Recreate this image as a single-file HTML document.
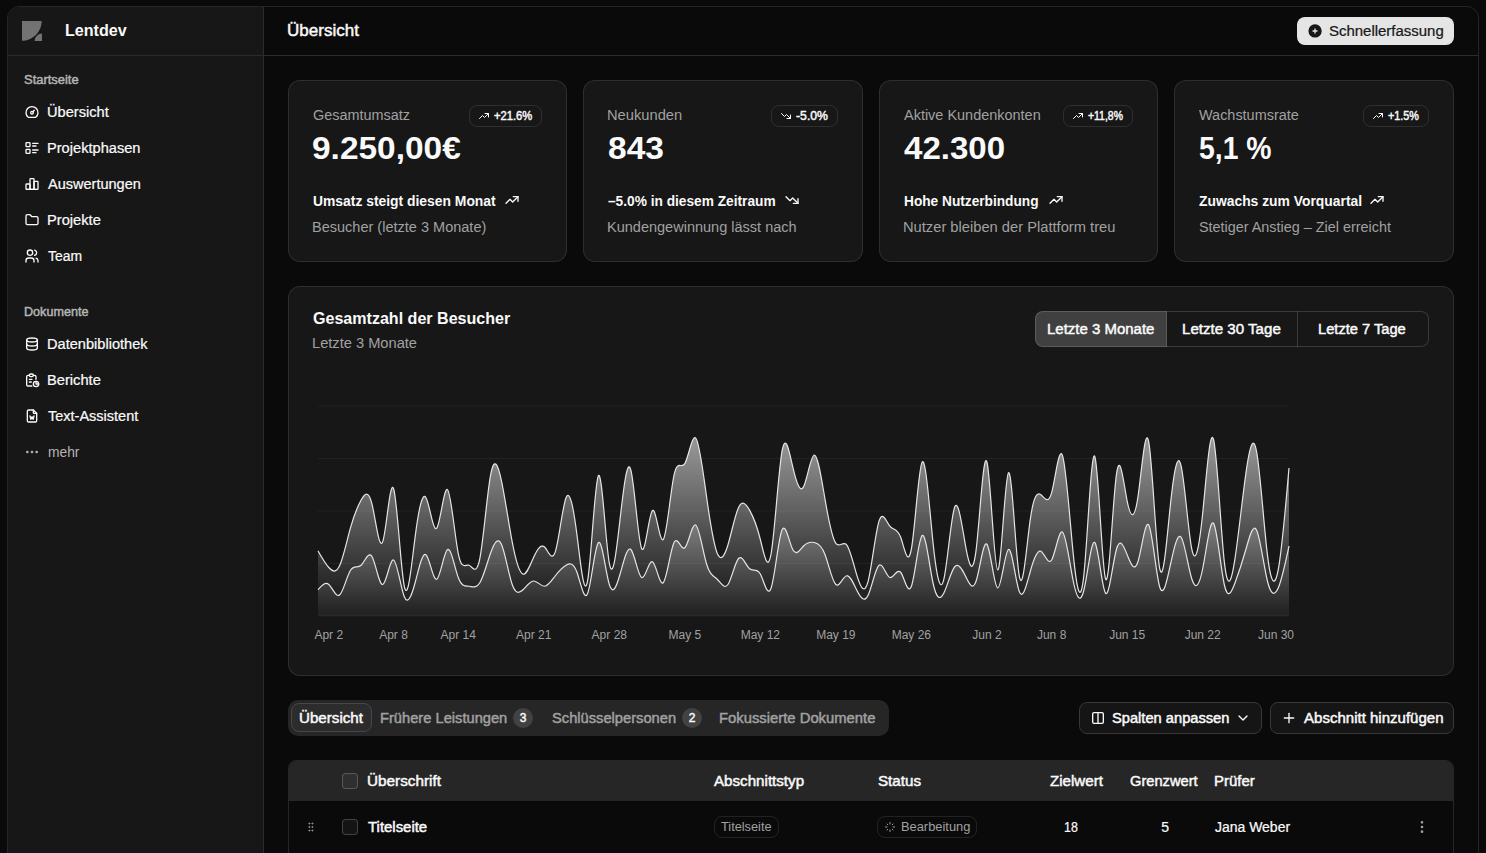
<!DOCTYPE html>
<html lang="de"><head><meta charset="utf-8"><title>Lentdev – Übersicht</title><style>
html,body{margin:0;padding:0;background:#0a0a0a;}
body{width:1486px;height:853px;overflow:hidden;position:relative;font-family:"Liberation Sans", sans-serif;}
.t{position:absolute;white-space:pre;line-height:1;font-family:"Liberation Sans", sans-serif;}
.i{position:absolute;display:block;overflow:visible;}
.frame{position:absolute;left:7px;top:6px;width:1470px;height:900px;border:1px solid #262626;border-radius:12px;background:#0a0a0a;}
.sidebar{position:absolute;left:8px;top:7px;width:255px;height:900px;background:#171717;border-radius:11px 0 0 0;}
.vline{position:absolute;left:263px;top:7px;width:1px;height:900px;background:#2b2b2b;}
.hline{position:absolute;left:8px;top:55px;width:1470px;height:1px;background:#2b2b2b;}
.qbtn{position:absolute;left:1297px;top:17px;width:157px;height:28px;border-radius:8px;background:#e5e5e5;}
.card{position:absolute;box-sizing:border-box;background:#171717;border:1px solid rgba(255,255,255,0.1);border-radius:12px;}
.badge{position:absolute;box-sizing:border-box;border:1px solid rgba(255,255,255,0.1);border-radius:8px;}
.tgi{position:absolute;top:311px;height:36px;box-sizing:border-box;border:1px solid rgba(255,255,255,0.15);}
.tabs{position:absolute;left:288px;top:700px;width:601px;height:36px;border-radius:10px;background:#262626;}
.tabact{position:absolute;box-sizing:border-box;left:291px;top:703px;width:81px;height:29px;border-radius:8px;background:#2c2c2c;border:1px solid #474747;}
.cnt{position:absolute;width:20px;height:20px;border-radius:10px;background:#424242;}
.obtn{position:absolute;box-sizing:border-box;border:1px solid #383838;border-radius:8px;background:#151515;}
.tbl{position:absolute;box-sizing:border-box;left:288px;top:760px;width:1166px;height:200px;border:1px solid #262626;border-radius:8px;overflow:hidden;}
.th{position:absolute;left:0;top:0;width:1166px;height:40px;background:#262626;}
.cb{position:absolute;box-sizing:border-box;width:16px;height:16px;border:1px solid rgba(255,255,255,0.2);border-radius:4px;background:rgba(255,255,255,0.045);}
</style></head><body><div class="frame"></div><aside><div class="sidebar"></div><div class="vline"></div><div class="hline"></div><svg class="i" style="left:22px;top:21px" width="20" height="20" viewBox="0 0 20 20"><defs><clipPath id="lc"><rect width="20" height="20"/></clipPath></defs><g clip-path="url(#lc)"><circle cx="20" cy="20" r="7.5" fill="#737373"/><circle cx="0" cy="0" r="20.9" fill="#171717"/><circle cx="0" cy="0" r="19.7" fill="#737373"/></g></svg><span class="t" style="top:23.00px;font-size:16px;color:#fafafa;font-weight:700;left:64.99px;transform:scaleX(1.0059);transform-origin:0 0;">Lentdev</span><span class="t" style="top:74.00px;font-size:12px;color:#b4b4b4;-webkit-text-stroke:0.45px currentColor;left:23.60px;transform:scaleX(1.0781);transform-origin:0 0;">Startseite</span><svg class="i" style="left:24px;top:104px" width="16" height="16" viewBox="0 0 24 24" fill="none" stroke="#fafafa" stroke-width="2" stroke-linecap="round" stroke-linejoin="round"><path d="M12 13m-2 0a2 2 0 1 0 4 0a2 2 0 1 0 -4 0"/><path d="M13.45 11.55l2.05 -2.05"/><path d="M6.4 20a9 9 0 1 1 11.2 0z"/></svg><span class="t" style="top:105.00px;font-size:14px;color:#fafafa;-webkit-text-stroke:0.22px currentColor;left:46.86px;transform:scaleX(1.0439);transform-origin:0 0;">Übersicht</span><svg class="i" style="left:24px;top:140px" width="16" height="16" viewBox="0 0 24 24" fill="none" stroke="#fafafa" stroke-width="2" stroke-linecap="round" stroke-linejoin="round"><path d="M13 5h8"/><path d="M13 9h5"/><path d="M13 15h8"/><path d="M13 19h5"/><path d="M3 4m0 1a1 1 0 0 1 1 -1h4a1 1 0 0 1 1 1v4a1 1 0 0 1 -1 1h-4a1 1 0 0 1 -1 -1z"/><path d="M3 14m0 1a1 1 0 0 1 1 -1h4a1 1 0 0 1 1 1v4a1 1 0 0 1 -1 1h-4a1 1 0 0 1 -1 -1z"/></svg><span class="t" style="top:141.00px;font-size:14px;color:#fafafa;-webkit-text-stroke:0.22px currentColor;left:46.86px;transform:scaleX(1.0443);transform-origin:0 0;">Projektphasen</span><svg class="i" style="left:24px;top:176px" width="16" height="16" viewBox="0 0 24 24" fill="none" stroke="#fafafa" stroke-width="2" stroke-linecap="round" stroke-linejoin="round"><path d="M3 13a1 1 0 0 1 1 -1h4a1 1 0 0 1 1 1v6a1 1 0 0 1 -1 1h-4a1 1 0 0 1 -1 -1z"/><path d="M15 9a1 1 0 0 1 1 -1h4a1 1 0 0 1 1 1v10a1 1 0 0 1 -1 1h-4a1 1 0 0 1 -1 -1z"/><path d="M9 5a1 1 0 0 1 1 -1h4a1 1 0 0 1 1 1v14a1 1 0 0 1 -1 1h-4a1 1 0 0 1 -1 -1z"/><path d="M4 20h14"/></svg><span class="t" style="top:177.00px;font-size:14px;color:#fafafa;-webkit-text-stroke:0.22px currentColor;left:47.90px;transform:scaleX(1.0370);transform-origin:0 0;">Auswertungen</span><svg class="i" style="left:24px;top:212px" width="16" height="16" viewBox="0 0 24 24" fill="none" stroke="#fafafa" stroke-width="2" stroke-linecap="round" stroke-linejoin="round"><path d="M5 4h4l3 3h7a2 2 0 0 1 2 2v8a2 2 0 0 1 -2 2h-14a2 2 0 0 1 -2 -2v-11a2 2 0 0 1 2 -2"/></svg><span class="t" style="top:213.00px;font-size:14px;color:#fafafa;-webkit-text-stroke:0.22px currentColor;left:46.85px;transform:scaleX(1.0480);transform-origin:0 0;">Projekte</span><svg class="i" style="left:24px;top:248px" width="16" height="16" viewBox="0 0 24 24" fill="none" stroke="#fafafa" stroke-width="2" stroke-linecap="round" stroke-linejoin="round"><path d="M9 7m-4 0a4 4 0 1 0 8 0a4 4 0 1 0 -8 0"/><path d="M3 21v-2a4 4 0 0 1 4 -4h4a4 4 0 0 1 4 4v2"/><path d="M16 3.13a4 4 0 0 1 0 7.75"/><path d="M21 21v-2a4 4 0 0 0 -3 -3.85"/></svg><span class="t" style="top:249.00px;font-size:14px;color:#fafafa;-webkit-text-stroke:0.22px currentColor;left:48.40px;transform:scaleX(0.9949);transform-origin:0 0;">Team</span><span class="t" style="top:306.00px;font-size:12px;color:#b4b4b4;-webkit-text-stroke:0.45px currentColor;left:23.80px;transform:scaleX(1.0504);transform-origin:0 0;">Dokumente</span><svg class="i" style="left:24px;top:336px" width="16" height="16" viewBox="0 0 24 24" fill="none" stroke="#fafafa" stroke-width="2" stroke-linecap="round" stroke-linejoin="round"><path d="M12 6m-8 0a8 3 0 1 0 16 0a8 3 0 1 0 -16 0"/><path d="M4 6v6a8 3 0 0 0 16 0v-6"/><path d="M4 12v6a8 3 0 0 0 16 0v-6"/></svg><span class="t" style="top:337.00px;font-size:14px;color:#fafafa;-webkit-text-stroke:0.22px currentColor;left:46.86px;transform:scaleX(1.0424);transform-origin:0 0;">Datenbibliothek</span><svg class="i" style="left:24px;top:372px" width="16" height="16" viewBox="0 0 24 24" fill="none" stroke="#fafafa" stroke-width="2" stroke-linecap="round" stroke-linejoin="round"><path d="M8 5h-2a2 2 0 0 0 -2 2v12a2 2 0 0 0 2 2h5.697"/><path d="M18 14v4h4"/><path d="M18 11v-4a2 2 0 0 0 -2 -2h-2"/><path d="M8 3m0 2a2 2 0 0 1 2 -2h2a2 2 0 0 1 2 2v0a2 2 0 0 1 -2 2h-2a2 2 0 0 1 -2 -2z"/><path d="M18 18m-4 0a4 4 0 1 0 8 0a4 4 0 1 0 -8 0"/><path d="M8 11h4"/><path d="M8 15h3"/></svg><span class="t" style="top:373.00px;font-size:14px;color:#fafafa;-webkit-text-stroke:0.22px currentColor;left:46.85px;transform:scaleX(1.0480);transform-origin:0 0;">Berichte</span><svg class="i" style="left:24px;top:408px" width="16" height="16" viewBox="0 0 24 24" fill="none" stroke="#fafafa" stroke-width="2" stroke-linecap="round" stroke-linejoin="round"><path d="M14 3v4a1 1 0 0 0 1 1h4"/><path d="M17 21h-10a2 2 0 0 1 -2 -2v-14a2 2 0 0 1 2 -2h7l5 5v11a2 2 0 0 1 -2 2z"/><path d="M9 12l1.333 5l1.667 -4l1.667 4l1.333 -5"/></svg><span class="t" style="top:409.00px;font-size:14px;color:#fafafa;-webkit-text-stroke:0.22px currentColor;left:48.40px;transform:scaleX(1.0361);transform-origin:0 0;">Text-Assistent</span><svg class="i" style="left:24px;top:444px" width="16" height="16" viewBox="0 0 24 24" fill="none" stroke="#b4b4b4" stroke-width="2" stroke-linecap="round" stroke-linejoin="round"><path d="M5 12m-1 0a1 1 0 1 0 2 0a1 1 0 1 0 -2 0"/><path d="M12 12m-1 0a1 1 0 1 0 2 0a1 1 0 1 0 -2 0"/><path d="M19 12m-1 0a1 1 0 1 0 2 0a1 1 0 1 0 -2 0"/></svg><span class="t" style="top:445.00px;font-size:14px;color:#b4b4b4;left:47.90px;transform:scaleX(0.9865);transform-origin:0 0;">mehr</span></aside><header><span class="t" style="top:23.00px;font-size:16px;color:#fafafa;-webkit-text-stroke:0.45px currentColor;left:286.94px;transform:scaleX(1.0636);transform-origin:0 0;">Übersicht</span><div class="qbtn"></div><svg class="i" style="left:1307px;top:23px" width="16" height="16" viewBox="0 0 24 24" fill="#171717" stroke="none"><path d="M4.929 4.929a10 10 0 1 1 14.141 14.141a10 10 0 0 1 -14.14 -14.14zm8.071 4.071a1 1 0 1 0 -2 0v2h-2a1 1 0 1 0 0 2h2v2a1 1 0 1 0 2 0v-2h2a1 1 0 1 0 0 -2h-2v-2z"/></svg><span class="t" style="top:24.00px;font-size:14px;color:#171717;-webkit-text-stroke:0.22px currentColor;left:1329.30px;transform:scaleX(1.0683);transform-origin:0 0;">Schnellerfassung</span></header><main><section><div class="card" style="left:288px;top:80px;width:279px;height:182px"></div><span class="t" style="top:108.00px;font-size:14px;color:#a1a1a1;left:312.70px;transform:scaleX(1.0304);transform-origin:0 0;">Gesamtumsatz</span><span class="t" style="top:133.00px;font-size:31px;color:#fafafa;font-weight:700;left:311.62px;transform:scaleX(1.0792);transform-origin:0 0;">9.250,00€</span><div class="badge" style="left:469px;top:105px;width:73px;height:22px"></div><svg class="i" style="left:477.5px;top:110px" width="12" height="12" viewBox="0 0 24 24" fill="none" stroke="#fafafa" stroke-width="2" stroke-linecap="round" stroke-linejoin="round"><path d="M3 17l6 -6l4 4l8 -8"/><path d="M14 7l7 0l0 7"/></svg><span class="t" style="top:110.00px;font-size:12px;color:#fafafa;-webkit-text-stroke:0.45px currentColor;left:494.20px;transform:scaleX(0.9332);transform-origin:0 0;">+21.6%</span><span class="t" style="top:194.00px;font-size:14px;color:#fafafa;font-weight:700;left:312.70px;transform:scaleX(0.9908);transform-origin:0 0;">Umsatz steigt diesen Monat</span><svg class="i" style="left:504px;top:191.5px" width="16" height="16" viewBox="0 0 24 24" fill="none" stroke="#fafafa" stroke-width="2" stroke-linecap="round" stroke-linejoin="round"><path d="M3 17l6 -6l4 4l8 -8"/><path d="M14 7l7 0l0 7"/></svg><span class="t" style="top:220.00px;font-size:14px;color:#a1a1a1;left:311.66px;transform:scaleX(1.0371);transform-origin:0 0;">Besucher (letzte 3 Monate)</span><div class="card" style="left:583px;top:80px;width:280px;height:182px"></div><span class="t" style="top:108.00px;font-size:14px;color:#a1a1a1;left:607.25px;transform:scaleX(1.0497);transform-origin:0 0;">Neukunden</span><span class="t" style="top:133.00px;font-size:31px;color:#fafafa;font-weight:700;left:608.30px;transform:scaleX(1.0819);transform-origin:0 0;">843</span><div class="badge" style="left:771px;top:105px;width:67px;height:22px"></div><svg class="i" style="left:779.5px;top:110px" width="12" height="12" viewBox="0 0 24 24" fill="none" stroke="#fafafa" stroke-width="2" stroke-linecap="round" stroke-linejoin="round"><path d="M3 7l6 6l4 -4l8 8"/><path d="M21 10l0 7l-7 0"/></svg><span class="t" style="top:110.00px;font-size:12px;color:#fafafa;-webkit-text-stroke:0.45px currentColor;left:796.20px;transform:scaleX(1.0196);transform-origin:0 0;">-5.0%</span><span class="t" style="top:194.00px;font-size:14px;color:#fafafa;font-weight:700;left:608.30px;transform:scaleX(0.9793);transform-origin:0 0;">–5.0% in diesem Zeitraum</span><svg class="i" style="left:784px;top:191.5px" width="16" height="16" viewBox="0 0 24 24" fill="none" stroke="#fafafa" stroke-width="2" stroke-linecap="round" stroke-linejoin="round"><path d="M3 7l6 6l4 -4l8 8"/><path d="M21 10l0 7l-7 0"/></svg><span class="t" style="top:220.00px;font-size:14px;color:#a1a1a1;left:607.26px;transform:scaleX(1.0368);transform-origin:0 0;">Kundengewinnung lässt nach</span><div class="card" style="left:879px;top:80px;width:279px;height:182px"></div><span class="t" style="top:108.00px;font-size:14px;color:#a1a1a1;left:903.70px;transform:scaleX(1.0332);transform-origin:0 0;">Aktive Kundenkonten</span><span class="t" style="top:133.00px;font-size:31px;color:#fafafa;font-weight:700;left:903.70px;transform:scaleX(1.0665);transform-origin:0 0;">42.300</span><div class="badge" style="left:1063px;top:105px;width:70px;height:22px"></div><svg class="i" style="left:1071.5px;top:110px" width="12" height="12" viewBox="0 0 24 24" fill="none" stroke="#fafafa" stroke-width="2" stroke-linecap="round" stroke-linejoin="round"><path d="M3 17l6 -6l4 4l8 -8"/><path d="M14 7l7 0l0 7"/></svg><span class="t" style="top:110.00px;font-size:12px;color:#fafafa;-webkit-text-stroke:0.45px currentColor;left:1088.20px;transform:scaleX(0.8697);transform-origin:0 0;">+11,8%</span><span class="t" style="top:194.00px;font-size:14px;color:#fafafa;font-weight:700;left:903.70px;transform:scaleX(0.9774);transform-origin:0 0;">Hohe Nutzerbindung</span><svg class="i" style="left:1047.5px;top:191.5px" width="16" height="16" viewBox="0 0 24 24" fill="none" stroke="#fafafa" stroke-width="2" stroke-linecap="round" stroke-linejoin="round"><path d="M3 17l6 -6l4 4l8 -8"/><path d="M14 7l7 0l0 7"/></svg><span class="t" style="top:220.00px;font-size:14px;color:#a1a1a1;left:902.65px;transform:scaleX(1.0497);transform-origin:0 0;">Nutzer bleiben der Plattform treu</span><div class="card" style="left:1174px;top:80px;width:280px;height:182px"></div><span class="t" style="top:108.00px;font-size:14px;color:#a1a1a1;left:1199.20px;transform:scaleX(1.0315);transform-origin:0 0;">Wachstumsrate</span><span class="t" style="top:133.00px;font-size:31px;color:#fafafa;font-weight:700;left:1199.20px;transform:scaleX(0.9148);transform-origin:0 0;">5,1 %</span><div class="badge" style="left:1363px;top:105px;width:66px;height:22px"></div><svg class="i" style="left:1371.5px;top:110px" width="12" height="12" viewBox="0 0 24 24" fill="none" stroke="#fafafa" stroke-width="2" stroke-linecap="round" stroke-linejoin="round"><path d="M3 17l6 -6l4 4l8 -8"/><path d="M14 7l7 0l0 7"/></svg><span class="t" style="top:110.00px;font-size:12px;color:#fafafa;-webkit-text-stroke:0.45px currentColor;left:1388.20px;transform:scaleX(0.8994);transform-origin:0 0;">+1.5%</span><span class="t" style="top:194.00px;font-size:14px;color:#fafafa;font-weight:700;left:1199.20px;transform:scaleX(0.9904);transform-origin:0 0;">Zuwachs zum Vorquartal</span><svg class="i" style="left:1369px;top:191.5px" width="16" height="16" viewBox="0 0 24 24" fill="none" stroke="#fafafa" stroke-width="2" stroke-linecap="round" stroke-linejoin="round"><path d="M3 17l6 -6l4 4l8 -8"/><path d="M14 7l7 0l0 7"/></svg><span class="t" style="top:220.00px;font-size:14px;color:#a1a1a1;left:1199.20px;transform:scaleX(1.0275);transform-origin:0 0;">Stetiger Anstieg – Ziel erreicht</span></section><section><div class="card" style="left:288px;top:286px;width:1166px;height:390px"></div><span class="t" style="top:311.00px;font-size:16px;color:#fafafa;font-weight:700;left:312.90px;transform:scaleX(1.0036);transform-origin:0 0;">Gesamtzahl der Besucher</span><span class="t" style="top:336.00px;font-size:14px;color:#a1a1a1;left:311.85px;transform:scaleX(1.0460);transform-origin:0 0;">Letzte 3 Monate</span><div class="tgi" style="left:1035px;width:132px;background:#404040;border-radius:8px 0 0 8px"></div><div class="tgi" style="left:1166px;width:132px;border-left-color:transparent"></div><div class="tgi" style="left:1297px;width:132px;border-left-color:transparent;border-radius:0 8px 8px 0"></div><span class="t" style="top:322.00px;font-size:14px;color:#fafafa;-webkit-text-stroke:0.45px currentColor;left:1046.73px;transform:scaleX(1.0701);transform-origin:0 0;">Letzte 3 Monate</span><span class="t" style="top:322.00px;font-size:14px;color:#fafafa;-webkit-text-stroke:0.45px currentColor;left:1181.72px;transform:scaleX(1.0784);transform-origin:0 0;">Letzte 30 Tage</span><span class="t" style="top:322.00px;font-size:14px;color:#fafafa;-webkit-text-stroke:0.45px currentColor;left:1318.05px;transform:scaleX(1.0471);transform-origin:0 0;">Letzte 7 Tage</span><svg class="i" style="left:0;top:0" width="1486" height="853" viewBox="0 0 1486 853"><defs><linearGradient id="gD" gradientUnits="userSpaceOnUse" x1="0" y1="437.9" x2="0" y2="596.8"><stop offset="5%" stop-color="#e5e5e5" stop-opacity="1"/><stop offset="95%" stop-color="#e5e5e5" stop-opacity="0.1"/></linearGradient><linearGradient id="gM" gradientUnits="userSpaceOnUse" x1="0" y1="523.2" x2="0" y2="616"><stop offset="5%" stop-color="#e5e5e5" stop-opacity="0.8"/><stop offset="95%" stop-color="#e5e5e5" stop-opacity="0.1"/></linearGradient></defs><line x1="318" x2="1289" y1="406.0" y2="406.0" stroke="#ffffff" stroke-opacity="0.05" stroke-width="1"/><line x1="318" x2="1289" y1="458.5" y2="458.5" stroke="#ffffff" stroke-opacity="0.05" stroke-width="1"/><line x1="318" x2="1289" y1="511.0" y2="511.0" stroke="#ffffff" stroke-opacity="0.05" stroke-width="1"/><line x1="318" x2="1289" y1="563.5" y2="563.5" stroke="#ffffff" stroke-opacity="0.05" stroke-width="1"/><line x1="318" x2="1289" y1="616.0" y2="616.0" stroke="#ffffff" stroke-opacity="0.05" stroke-width="1"/><path d="M318,589.75C321.6,585.6,325.19,581.45,328.79,584.5C332.39,587.55,335.98,597.8,339.58,595C343.17,592.2,346.77,576.36,350.37,570.5C353.96,564.64,357.56,568.76,361.16,565.25C364.75,561.74,368.35,550.59,371.94,556.5C375.54,562.41,379.14,585.37,382.73,584.5C386.33,583.63,389.93,558.91,393.52,560C397.12,561.09,400.71,587.99,404.31,596.75C407.91,605.51,411.5,596.15,415.1,582.75C418.7,569.35,422.29,551.93,425.89,554.75C429.49,557.57,433.08,580.64,436.68,579.25C440.27,577.86,443.87,552.02,447.47,549.5C451.06,546.98,454.66,567.77,458.26,577.5C461.85,587.23,465.45,585.9,469.04,586.25C472.64,586.6,476.24,588.62,479.83,582.75C483.43,576.88,487.03,563.12,490.62,553C494.22,542.88,497.81,536.42,501.41,544.25C505.01,552.08,508.6,574.22,512.2,584.5C515.8,594.78,519.39,593.2,522.99,589.75C526.59,586.3,530.18,580.97,533.78,581C537.37,581.03,540.97,586.4,544.57,586.25C548.16,586.1,551.76,580.42,555.36,575.75C558.95,571.08,562.55,567.42,566.14,565.25C569.74,563.08,573.34,562.41,576.93,572.25C580.53,582.09,584.13,602.44,587.72,593.25C591.32,584.06,594.91,545.32,598.51,542.5C602.11,539.68,605.7,572.78,609.3,584.5C612.9,596.22,616.49,586.58,620.09,574C623.69,561.42,627.28,545.91,630.88,549.5C634.47,553.09,638.07,575.77,641.67,577.5C645.26,579.23,648.86,560,652.46,561.75C656.05,563.5,659.65,586.22,663.24,582.75C666.84,579.28,670.44,549.63,674.03,542.5C677.63,535.37,681.23,550.75,684.82,547.75C688.42,544.75,692.01,523.38,695.61,525C699.21,526.62,702.8,551.22,706.4,563.5C710,575.78,713.59,575.75,717.19,579.25C720.79,582.75,724.38,589.77,727.98,584.5C731.57,579.23,735.17,561.65,738.77,558.25C742.36,554.85,745.96,565.62,749.56,568.75C753.15,571.88,756.75,567.37,760.34,574C763.94,580.63,767.54,598.4,771.13,588C774.73,577.6,778.33,539.04,781.92,530.25C785.52,521.46,789.11,542.44,792.71,549.5C796.31,556.56,799.9,549.7,803.5,546C807.1,542.3,810.69,541.78,814.29,542.5C817.89,543.22,821.48,545.19,825.08,554.75C828.67,564.31,832.27,581.46,835.87,584.5C839.46,587.54,843.06,576.48,846.66,575.75C850.25,575.02,853.85,584.61,857.44,591.5C861.04,598.39,864.64,602.58,868.23,595C871.83,587.42,875.43,568.08,879.02,565.25C882.62,562.42,886.21,576.1,889.81,577.5C893.41,578.9,897,568.02,900.6,572.25C904.2,576.48,907.79,595.82,911.39,586.25C914.99,576.68,918.58,538.2,922.18,535.5C925.77,532.8,929.37,565.88,932.97,582.75C936.56,599.62,940.16,600.3,943.76,593.25C947.35,586.2,950.95,571.44,954.54,567C958.14,562.56,961.74,568.45,965.33,575.75C968.93,583.05,972.53,591.77,976.12,581C979.72,570.23,983.31,539.97,986.91,544.25C990.51,548.53,994.1,587.36,997.7,588C1001.3,588.64,1004.89,551.11,1008.49,549.5C1012.09,547.89,1015.68,582.22,1019.28,591.5C1022.87,600.78,1026.47,585.03,1030.07,572.25C1033.66,559.47,1037.26,549.67,1040.86,551.25C1044.45,552.83,1048.05,565.78,1051.64,560C1055.24,554.22,1058.84,529.7,1062.43,532C1066.03,534.3,1069.63,563.41,1073.22,581C1076.82,598.59,1080.41,604.67,1084.01,589.75C1087.61,574.83,1091.2,538.92,1094.8,542.5C1098.4,546.08,1101.99,589.17,1105.59,593.25C1109.19,597.33,1112.78,562.41,1116.38,549.5C1119.97,536.59,1123.57,545.68,1127.17,554.75C1130.76,563.82,1134.36,572.88,1137.96,561.75C1141.55,550.62,1145.15,519.29,1148.74,525C1152.34,530.71,1155.94,573.45,1159.53,586.25C1163.13,599.05,1166.73,581.92,1170.32,565.25C1173.92,548.58,1177.51,532.36,1181.11,537.25C1184.71,542.14,1188.3,568.13,1191.9,579.25C1195.5,590.37,1199.09,586.62,1202.69,568.75C1206.29,550.88,1209.88,518.9,1213.48,523.25C1217.07,527.6,1220.67,568.3,1224.27,584.5C1227.86,600.7,1231.46,592.41,1235.06,582.75C1238.65,573.09,1242.25,562.05,1245.84,549.5C1249.44,536.95,1253.04,522.9,1256.63,530.25C1260.23,537.6,1263.83,566.35,1267.42,581C1271.02,595.65,1274.61,596.18,1278.21,588C1281.81,579.82,1285.4,562.91,1289,546L1289.00,616.00L318.00,616.00Z" fill="url(#gM)" fill-opacity="0.6"/><path d="M318,589.75C321.6,585.6,325.19,581.45,328.79,584.5C332.39,587.55,335.98,597.8,339.58,595C343.17,592.2,346.77,576.36,350.37,570.5C353.96,564.64,357.56,568.76,361.16,565.25C364.75,561.74,368.35,550.59,371.94,556.5C375.54,562.41,379.14,585.37,382.73,584.5C386.33,583.63,389.93,558.91,393.52,560C397.12,561.09,400.71,587.99,404.31,596.75C407.91,605.51,411.5,596.15,415.1,582.75C418.7,569.35,422.29,551.93,425.89,554.75C429.49,557.57,433.08,580.64,436.68,579.25C440.27,577.86,443.87,552.02,447.47,549.5C451.06,546.98,454.66,567.77,458.26,577.5C461.85,587.23,465.45,585.9,469.04,586.25C472.64,586.6,476.24,588.62,479.83,582.75C483.43,576.88,487.03,563.12,490.62,553C494.22,542.88,497.81,536.42,501.41,544.25C505.01,552.08,508.6,574.22,512.2,584.5C515.8,594.78,519.39,593.2,522.99,589.75C526.59,586.3,530.18,580.97,533.78,581C537.37,581.03,540.97,586.4,544.57,586.25C548.16,586.1,551.76,580.42,555.36,575.75C558.95,571.08,562.55,567.42,566.14,565.25C569.74,563.08,573.34,562.41,576.93,572.25C580.53,582.09,584.13,602.44,587.72,593.25C591.32,584.06,594.91,545.32,598.51,542.5C602.11,539.68,605.7,572.78,609.3,584.5C612.9,596.22,616.49,586.58,620.09,574C623.69,561.42,627.28,545.91,630.88,549.5C634.47,553.09,638.07,575.77,641.67,577.5C645.26,579.23,648.86,560,652.46,561.75C656.05,563.5,659.65,586.22,663.24,582.75C666.84,579.28,670.44,549.63,674.03,542.5C677.63,535.37,681.23,550.75,684.82,547.75C688.42,544.75,692.01,523.38,695.61,525C699.21,526.62,702.8,551.22,706.4,563.5C710,575.78,713.59,575.75,717.19,579.25C720.79,582.75,724.38,589.77,727.98,584.5C731.57,579.23,735.17,561.65,738.77,558.25C742.36,554.85,745.96,565.62,749.56,568.75C753.15,571.88,756.75,567.37,760.34,574C763.94,580.63,767.54,598.4,771.13,588C774.73,577.6,778.33,539.04,781.92,530.25C785.52,521.46,789.11,542.44,792.71,549.5C796.31,556.56,799.9,549.7,803.5,546C807.1,542.3,810.69,541.78,814.29,542.5C817.89,543.22,821.48,545.19,825.08,554.75C828.67,564.31,832.27,581.46,835.87,584.5C839.46,587.54,843.06,576.48,846.66,575.75C850.25,575.02,853.85,584.61,857.44,591.5C861.04,598.39,864.64,602.58,868.23,595C871.83,587.42,875.43,568.08,879.02,565.25C882.62,562.42,886.21,576.1,889.81,577.5C893.41,578.9,897,568.02,900.6,572.25C904.2,576.48,907.79,595.82,911.39,586.25C914.99,576.68,918.58,538.2,922.18,535.5C925.77,532.8,929.37,565.88,932.97,582.75C936.56,599.62,940.16,600.3,943.76,593.25C947.35,586.2,950.95,571.44,954.54,567C958.14,562.56,961.74,568.45,965.33,575.75C968.93,583.05,972.53,591.77,976.12,581C979.72,570.23,983.31,539.97,986.91,544.25C990.51,548.53,994.1,587.36,997.7,588C1001.3,588.64,1004.89,551.11,1008.49,549.5C1012.09,547.89,1015.68,582.22,1019.28,591.5C1022.87,600.78,1026.47,585.03,1030.07,572.25C1033.66,559.47,1037.26,549.67,1040.86,551.25C1044.45,552.83,1048.05,565.78,1051.64,560C1055.24,554.22,1058.84,529.7,1062.43,532C1066.03,534.3,1069.63,563.41,1073.22,581C1076.82,598.59,1080.41,604.67,1084.01,589.75C1087.61,574.83,1091.2,538.92,1094.8,542.5C1098.4,546.08,1101.99,589.17,1105.59,593.25C1109.19,597.33,1112.78,562.41,1116.38,549.5C1119.97,536.59,1123.57,545.68,1127.17,554.75C1130.76,563.82,1134.36,572.88,1137.96,561.75C1141.55,550.62,1145.15,519.29,1148.74,525C1152.34,530.71,1155.94,573.45,1159.53,586.25C1163.13,599.05,1166.73,581.92,1170.32,565.25C1173.92,548.58,1177.51,532.36,1181.11,537.25C1184.71,542.14,1188.3,568.13,1191.9,579.25C1195.5,590.37,1199.09,586.62,1202.69,568.75C1206.29,550.88,1209.88,518.9,1213.48,523.25C1217.07,527.6,1220.67,568.3,1224.27,584.5C1227.86,600.7,1231.46,592.41,1235.06,582.75C1238.65,573.09,1242.25,562.05,1245.84,549.5C1249.44,536.95,1253.04,522.9,1256.63,530.25C1260.23,537.6,1263.83,566.35,1267.42,581C1271.02,595.65,1274.61,596.18,1278.21,588C1281.81,579.82,1285.4,562.91,1289,546" fill="none" stroke="#e5e5e5" stroke-width="1.2"/><path d="M318,550.9C321.6,557.19,325.19,563.47,328.79,567.52C332.39,571.58,335.98,573.4,339.58,565.77C343.17,558.15,346.77,541.08,350.37,528.15C353.96,515.22,357.56,506.45,361.16,499.98C364.75,493.5,368.35,489.33,371.94,503.82C375.54,518.32,379.14,551.47,382.73,541.62C386.33,531.78,389.93,478.95,393.52,488.43C397.12,497.9,400.71,569.67,404.31,586.42C407.91,603.18,411.5,564.93,415.1,537.08C418.7,509.22,422.29,491.76,425.89,497.52C429.49,503.29,433.08,532.29,436.68,528.15C440.27,524.01,443.87,486.73,447.47,489.65C451.06,492.57,454.66,535.69,458.26,553.52C461.85,571.36,465.45,563.91,469.04,565.25C472.64,566.59,476.24,576.71,479.83,558.6C483.43,540.49,487.03,494.14,490.62,474.95C494.22,455.76,497.81,463.74,501.41,480.55C505.01,497.36,508.6,523.02,512.2,541.98C515.8,560.93,519.39,573.18,522.99,574.17C526.59,575.17,530.18,564.9,533.78,557.02C537.37,549.15,540.97,543.66,544.57,547.05C548.16,550.44,551.76,562.72,555.36,551.6C558.95,540.48,562.55,505.98,566.14,497.52C569.74,489.07,573.34,506.67,576.93,534.62C580.53,562.58,584.13,600.91,587.72,580.12C591.32,559.34,594.91,479.46,598.51,475.48C602.11,471.49,605.7,543.41,609.3,563.15C612.9,582.89,616.49,550.45,620.09,518.88C623.69,487.3,627.28,456.6,630.88,470.05C634.47,483.5,638.07,541.08,641.67,548.62C645.26,556.17,648.86,513.66,652.46,510.48C656.05,507.29,659.65,543.44,663.24,539.52C666.84,535.61,670.44,491.65,674.03,475.12C677.63,458.6,681.23,469.52,684.82,463.57C688.42,457.63,692.01,434.83,695.61,437.85C699.21,440.87,702.8,469.73,706.4,495.6C710,521.47,713.59,544.37,717.19,553.17C720.79,561.98,724.38,556.71,727.98,544.77C731.57,532.84,735.17,514.25,738.77,506.98C742.36,499.7,745.96,503.76,749.56,510.12C753.15,516.49,756.75,525.17,760.34,539.52C763.94,553.88,767.54,573.91,771.13,553.52C774.73,533.14,778.33,472.34,781.92,451.85C785.52,431.36,789.11,451.18,792.71,466.73C796.31,482.27,799.9,493.53,803.5,486.85C807.1,480.17,810.69,455.53,814.29,455.18C817.89,454.82,821.48,478.73,825.08,499.62C828.67,520.52,832.27,538.4,835.87,543.38C839.46,548.35,843.06,540.44,846.66,544.77C850.25,549.11,853.85,565.71,857.44,577.15C861.04,588.59,864.64,594.86,868.23,580.83C871.83,566.79,875.43,532.44,879.02,521.15C882.62,509.86,886.21,521.64,889.81,526.05C893.41,530.46,897,527.49,900.6,537.08C904.2,546.66,907.79,568.79,911.39,548.98C914.99,529.16,918.58,467.4,922.18,462C925.77,456.6,929.37,507.55,932.97,541.98C936.56,576.4,940.16,594.28,943.76,579.6C947.35,564.92,950.95,517.66,954.54,507.5C958.14,497.34,961.74,524.29,965.33,544.6C968.93,564.91,972.53,578.6,976.12,549.85C979.72,521.1,983.31,449.91,986.91,462C990.51,474.09,994.1,569.47,997.7,569.98C1001.3,570.48,1004.89,476.11,1008.49,472.68C1012.09,469.24,1015.68,556.75,1019.28,576.1C1022.87,595.45,1026.47,546.64,1030.07,520.8C1033.66,494.96,1037.26,492.09,1040.86,494.73C1044.45,497.36,1048.05,505.51,1051.64,492.62C1055.24,479.74,1058.84,445.82,1062.43,455.35C1066.03,464.88,1069.63,517.84,1073.22,553.88C1076.82,589.91,1080.41,609,1084.01,573.65C1087.61,538.3,1091.2,448.52,1094.8,456.4C1098.4,464.28,1101.99,569.82,1105.59,579.08C1109.19,588.33,1112.78,501.29,1116.38,474.95C1119.97,448.61,1123.57,482.98,1127.17,501.02C1130.76,519.07,1134.36,520.8,1137.96,496.82C1141.55,472.85,1145.15,423.15,1148.74,441.88C1152.34,460.6,1155.94,547.73,1159.53,567.52C1163.13,587.32,1166.73,539.79,1170.32,505.57C1173.92,471.36,1177.51,450.46,1181.11,465.85C1184.71,481.24,1188.3,532.93,1191.9,549.67C1195.5,566.42,1199.09,548.23,1202.69,513.27C1206.29,478.32,1209.88,426.6,1213.48,439.25C1217.07,451.9,1220.67,528.93,1224.27,561.4C1227.86,593.87,1231.46,581.79,1235.06,558.08C1238.65,534.36,1242.25,499.02,1245.84,473.55C1249.44,448.08,1253.04,432.48,1256.63,451.85C1260.23,471.22,1263.83,525.57,1267.42,554.92C1271.02,584.28,1274.61,588.64,1278.21,569.98C1281.81,551.31,1285.4,509.63,1289,467.95L1289,546C1285.4,562.91,1281.81,579.82,1278.21,588C1274.61,596.18,1271.02,595.65,1267.42,581C1263.83,566.35,1260.23,537.6,1256.63,530.25C1253.04,522.9,1249.44,536.95,1245.84,549.5C1242.25,562.05,1238.65,573.09,1235.06,582.75C1231.46,592.41,1227.86,600.7,1224.27,584.5C1220.67,568.3,1217.07,527.6,1213.48,523.25C1209.88,518.9,1206.29,550.88,1202.69,568.75C1199.09,586.62,1195.5,590.37,1191.9,579.25C1188.3,568.13,1184.71,542.14,1181.11,537.25C1177.51,532.36,1173.92,548.58,1170.32,565.25C1166.73,581.92,1163.13,599.05,1159.53,586.25C1155.94,573.45,1152.34,530.71,1148.74,525C1145.15,519.29,1141.55,550.62,1137.96,561.75C1134.36,572.88,1130.76,563.82,1127.17,554.75C1123.57,545.68,1119.97,536.59,1116.38,549.5C1112.78,562.41,1109.19,597.33,1105.59,593.25C1101.99,589.17,1098.4,546.08,1094.8,542.5C1091.2,538.92,1087.61,574.83,1084.01,589.75C1080.41,604.67,1076.82,598.59,1073.22,581C1069.63,563.41,1066.03,534.3,1062.43,532C1058.84,529.7,1055.24,554.22,1051.64,560C1048.05,565.78,1044.45,552.83,1040.86,551.25C1037.26,549.67,1033.66,559.47,1030.07,572.25C1026.47,585.03,1022.87,600.78,1019.28,591.5C1015.68,582.22,1012.09,547.89,1008.49,549.5C1004.89,551.11,1001.3,588.64,997.7,588C994.1,587.36,990.51,548.53,986.91,544.25C983.31,539.97,979.72,570.23,976.12,581C972.53,591.77,968.93,583.05,965.33,575.75C961.74,568.45,958.14,562.56,954.54,567C950.95,571.44,947.35,586.2,943.76,593.25C940.16,600.3,936.56,599.62,932.97,582.75C929.37,565.88,925.77,532.8,922.18,535.5C918.58,538.2,914.99,576.68,911.39,586.25C907.79,595.82,904.2,576.48,900.6,572.25C897,568.02,893.41,578.9,889.81,577.5C886.21,576.1,882.62,562.42,879.02,565.25C875.43,568.08,871.83,587.42,868.23,595C864.64,602.58,861.04,598.39,857.44,591.5C853.85,584.61,850.25,575.02,846.66,575.75C843.06,576.48,839.46,587.54,835.87,584.5C832.27,581.46,828.67,564.31,825.08,554.75C821.48,545.19,817.89,543.22,814.29,542.5C810.69,541.78,807.1,542.3,803.5,546C799.9,549.7,796.31,556.56,792.71,549.5C789.11,542.44,785.52,521.46,781.92,530.25C778.33,539.04,774.73,577.6,771.13,588C767.54,598.4,763.94,580.63,760.34,574C756.75,567.37,753.15,571.88,749.56,568.75C745.96,565.62,742.36,554.85,738.77,558.25C735.17,561.65,731.57,579.23,727.98,584.5C724.38,589.77,720.79,582.75,717.19,579.25C713.59,575.75,710,575.78,706.4,563.5C702.8,551.22,699.21,526.62,695.61,525C692.01,523.38,688.42,544.75,684.82,547.75C681.23,550.75,677.63,535.37,674.03,542.5C670.44,549.63,666.84,579.28,663.24,582.75C659.65,586.22,656.05,563.5,652.46,561.75C648.86,560,645.26,579.23,641.67,577.5C638.07,575.77,634.47,553.09,630.88,549.5C627.28,545.91,623.69,561.42,620.09,574C616.49,586.58,612.9,596.22,609.3,584.5C605.7,572.78,602.11,539.68,598.51,542.5C594.91,545.32,591.32,584.06,587.72,593.25C584.13,602.44,580.53,582.09,576.93,572.25C573.34,562.41,569.74,563.08,566.14,565.25C562.55,567.42,558.95,571.08,555.36,575.75C551.76,580.42,548.16,586.1,544.57,586.25C540.97,586.4,537.37,581.03,533.78,581C530.18,580.97,526.59,586.3,522.99,589.75C519.39,593.2,515.8,594.78,512.2,584.5C508.6,574.22,505.01,552.08,501.41,544.25C497.81,536.42,494.22,542.88,490.62,553C487.03,563.12,483.43,576.88,479.83,582.75C476.24,588.62,472.64,586.6,469.04,586.25C465.45,585.9,461.85,587.23,458.26,577.5C454.66,567.77,451.06,546.98,447.47,549.5C443.87,552.02,440.27,577.86,436.68,579.25C433.08,580.64,429.49,557.57,425.89,554.75C422.29,551.93,418.7,569.35,415.1,582.75C411.5,596.15,407.91,605.51,404.31,596.75C400.71,587.99,397.12,561.09,393.52,560C389.93,558.91,386.33,583.63,382.73,584.5C379.14,585.37,375.54,562.41,371.94,556.5C368.35,550.59,364.75,561.74,361.16,565.25C357.56,568.76,353.96,564.64,350.37,570.5C346.77,576.36,343.17,592.2,339.58,595C335.98,597.8,332.39,587.55,328.79,584.5C325.19,581.45,321.6,585.6,318,589.75Z" fill="url(#gD)" fill-opacity="0.6"/><path d="M318,550.9C321.6,557.19,325.19,563.47,328.79,567.52C332.39,571.58,335.98,573.4,339.58,565.77C343.17,558.15,346.77,541.08,350.37,528.15C353.96,515.22,357.56,506.45,361.16,499.98C364.75,493.5,368.35,489.33,371.94,503.82C375.54,518.32,379.14,551.47,382.73,541.62C386.33,531.78,389.93,478.95,393.52,488.43C397.12,497.9,400.71,569.67,404.31,586.42C407.91,603.18,411.5,564.93,415.1,537.08C418.7,509.22,422.29,491.76,425.89,497.52C429.49,503.29,433.08,532.29,436.68,528.15C440.27,524.01,443.87,486.73,447.47,489.65C451.06,492.57,454.66,535.69,458.26,553.52C461.85,571.36,465.45,563.91,469.04,565.25C472.64,566.59,476.24,576.71,479.83,558.6C483.43,540.49,487.03,494.14,490.62,474.95C494.22,455.76,497.81,463.74,501.41,480.55C505.01,497.36,508.6,523.02,512.2,541.98C515.8,560.93,519.39,573.18,522.99,574.17C526.59,575.17,530.18,564.9,533.78,557.02C537.37,549.15,540.97,543.66,544.57,547.05C548.16,550.44,551.76,562.72,555.36,551.6C558.95,540.48,562.55,505.98,566.14,497.52C569.74,489.07,573.34,506.67,576.93,534.62C580.53,562.58,584.13,600.91,587.72,580.12C591.32,559.34,594.91,479.46,598.51,475.48C602.11,471.49,605.7,543.41,609.3,563.15C612.9,582.89,616.49,550.45,620.09,518.88C623.69,487.3,627.28,456.6,630.88,470.05C634.47,483.5,638.07,541.08,641.67,548.62C645.26,556.17,648.86,513.66,652.46,510.48C656.05,507.29,659.65,543.44,663.24,539.52C666.84,535.61,670.44,491.65,674.03,475.12C677.63,458.6,681.23,469.52,684.82,463.57C688.42,457.63,692.01,434.83,695.61,437.85C699.21,440.87,702.8,469.73,706.4,495.6C710,521.47,713.59,544.37,717.19,553.17C720.79,561.98,724.38,556.71,727.98,544.77C731.57,532.84,735.17,514.25,738.77,506.98C742.36,499.7,745.96,503.76,749.56,510.12C753.15,516.49,756.75,525.17,760.34,539.52C763.94,553.88,767.54,573.91,771.13,553.52C774.73,533.14,778.33,472.34,781.92,451.85C785.52,431.36,789.11,451.18,792.71,466.73C796.31,482.27,799.9,493.53,803.5,486.85C807.1,480.17,810.69,455.53,814.29,455.18C817.89,454.82,821.48,478.73,825.08,499.62C828.67,520.52,832.27,538.4,835.87,543.38C839.46,548.35,843.06,540.44,846.66,544.77C850.25,549.11,853.85,565.71,857.44,577.15C861.04,588.59,864.64,594.86,868.23,580.83C871.83,566.79,875.43,532.44,879.02,521.15C882.62,509.86,886.21,521.64,889.81,526.05C893.41,530.46,897,527.49,900.6,537.08C904.2,546.66,907.79,568.79,911.39,548.98C914.99,529.16,918.58,467.4,922.18,462C925.77,456.6,929.37,507.55,932.97,541.98C936.56,576.4,940.16,594.28,943.76,579.6C947.35,564.92,950.95,517.66,954.54,507.5C958.14,497.34,961.74,524.29,965.33,544.6C968.93,564.91,972.53,578.6,976.12,549.85C979.72,521.1,983.31,449.91,986.91,462C990.51,474.09,994.1,569.47,997.7,569.98C1001.3,570.48,1004.89,476.11,1008.49,472.68C1012.09,469.24,1015.68,556.75,1019.28,576.1C1022.87,595.45,1026.47,546.64,1030.07,520.8C1033.66,494.96,1037.26,492.09,1040.86,494.73C1044.45,497.36,1048.05,505.51,1051.64,492.62C1055.24,479.74,1058.84,445.82,1062.43,455.35C1066.03,464.88,1069.63,517.84,1073.22,553.88C1076.82,589.91,1080.41,609,1084.01,573.65C1087.61,538.3,1091.2,448.52,1094.8,456.4C1098.4,464.28,1101.99,569.82,1105.59,579.08C1109.19,588.33,1112.78,501.29,1116.38,474.95C1119.97,448.61,1123.57,482.98,1127.17,501.02C1130.76,519.07,1134.36,520.8,1137.96,496.82C1141.55,472.85,1145.15,423.15,1148.74,441.88C1152.34,460.6,1155.94,547.73,1159.53,567.52C1163.13,587.32,1166.73,539.79,1170.32,505.57C1173.92,471.36,1177.51,450.46,1181.11,465.85C1184.71,481.24,1188.3,532.93,1191.9,549.67C1195.5,566.42,1199.09,548.23,1202.69,513.27C1206.29,478.32,1209.88,426.6,1213.48,439.25C1217.07,451.9,1220.67,528.93,1224.27,561.4C1227.86,593.87,1231.46,581.79,1235.06,558.08C1238.65,534.36,1242.25,499.02,1245.84,473.55C1249.44,448.08,1253.04,432.48,1256.63,451.85C1260.23,471.22,1263.83,525.57,1267.42,554.92C1271.02,584.28,1274.61,588.64,1278.21,569.98C1281.81,551.31,1285.4,509.63,1289,467.95" fill="none" stroke="#e5e5e5" stroke-width="1.2"/></svg><span class="t" style="top:629.00px;font-size:12px;color:#a1a1a1;left:328.79px;transform:translateX(-50%);">Apr 2</span><span class="t" style="top:629.00px;font-size:12px;color:#a1a1a1;left:393.52px;transform:translateX(-50%);">Apr 8</span><span class="t" style="top:629.00px;font-size:12px;color:#a1a1a1;left:458.26px;transform:translateX(-50%);">Apr 14</span><span class="t" style="top:629.00px;font-size:12px;color:#a1a1a1;left:533.78px;transform:translateX(-50%);">Apr 21</span><span class="t" style="top:629.00px;font-size:12px;color:#a1a1a1;left:609.30px;transform:translateX(-50%);">Apr 28</span><span class="t" style="top:629.00px;font-size:12px;color:#a1a1a1;left:684.82px;transform:translateX(-50%);">May 5</span><span class="t" style="top:629.00px;font-size:12px;color:#a1a1a1;left:760.34px;transform:translateX(-50%);">May 12</span><span class="t" style="top:629.00px;font-size:12px;color:#a1a1a1;left:835.87px;transform:translateX(-50%);">May 19</span><span class="t" style="top:629.00px;font-size:12px;color:#a1a1a1;left:911.39px;transform:translateX(-50%);">May 26</span><span class="t" style="top:629.00px;font-size:12px;color:#a1a1a1;left:986.91px;transform:translateX(-50%);">Jun 2</span><span class="t" style="top:629.00px;font-size:12px;color:#a1a1a1;left:1051.64px;transform:translateX(-50%);">Jun 8</span><span class="t" style="top:629.00px;font-size:12px;color:#a1a1a1;left:1127.17px;transform:translateX(-50%);">Jun 15</span><span class="t" style="top:629.00px;font-size:12px;color:#a1a1a1;left:1202.69px;transform:translateX(-50%);">Jun 22</span><span class="t" style="top:629.00px;font-size:12px;color:#a1a1a1;left:1294.00px;transform:translateX(-100%);">Jun 30</span></section><section><div class="tabs"></div><div class="tabact"></div><span class="t" style="top:711.00px;font-size:14px;color:#fafafa;-webkit-text-stroke:0.45px currentColor;left:298.82px;transform:scaleX(1.0817);transform-origin:0 0;">Übersicht</span><span class="t" style="top:711.00px;font-size:14px;color:#a1a1a1;-webkit-text-stroke:0.45px currentColor;left:380.35px;transform:scaleX(1.0483);transform-origin:0 0;">Frühere Leistungen</span><div class="cnt" style="left:513px;top:708px"></div><span class="t" style="top:712.00px;font-size:12px;color:#fafafa;-webkit-text-stroke:0.45px currentColor;left:523.00px;transform:translateX(-50%);">3</span><span class="t" style="top:711.00px;font-size:14px;color:#a1a1a1;-webkit-text-stroke:0.45px currentColor;left:551.90px;transform:scaleX(1.0493);transform-origin:0 0;">Schlüsselpersonen</span><div class="cnt" style="left:682px;top:708px"></div><span class="t" style="top:712.00px;font-size:12px;color:#fafafa;-webkit-text-stroke:0.45px currentColor;left:692.00px;transform:translateX(-50%);">2</span><span class="t" style="top:711.00px;font-size:14px;color:#a1a1a1;-webkit-text-stroke:0.45px currentColor;left:719.44px;transform:scaleX(1.0581);transform-origin:0 0;">Fokussierte Dokumente</span><div class="obtn" style="left:1079px;top:702px;width:183px;height:32px"></div><svg class="i" style="left:1090px;top:710px" width="16" height="16" viewBox="0 0 24 24" fill="none" stroke="#fafafa" stroke-width="2" stroke-linecap="round" stroke-linejoin="round"><path d="M4 4m0 2a2 2 0 0 1 2 -2h12a2 2 0 0 1 2 2v12a2 2 0 0 1 -2 2h-12a2 2 0 0 1 -2 -2z"/><path d="M12 4l0 16"/></svg><span class="t" style="top:711.00px;font-size:14px;color:#fafafa;-webkit-text-stroke:0.45px currentColor;left:1111.70px;transform:scaleX(1.0476);transform-origin:0 0;">Spalten anpassen</span><svg class="i" style="left:1235px;top:710px" width="16" height="16" viewBox="0 0 24 24" fill="none" stroke="#fafafa" stroke-width="2" stroke-linecap="round" stroke-linejoin="round"><path d="M6 9l6 6l6 -6"/></svg><div class="obtn" style="left:1270px;top:702px;width:184px;height:32px"></div><svg class="i" style="left:1281px;top:710px" width="16" height="16" viewBox="0 0 24 24" fill="none" stroke="#fafafa" stroke-width="2" stroke-linecap="round" stroke-linejoin="round"><path d="M12 5l0 14"/><path d="M5 12l14 0"/></svg><span class="t" style="top:711.00px;font-size:14px;color:#fafafa;-webkit-text-stroke:0.45px currentColor;left:1303.60px;transform:scaleX(1.0736);transform-origin:0 0;">Abschnitt hinzufügen</span><div class="tbl"><div class="th"></div></div><div class="cb" style="left:342px;top:773px"></div><span class="t" style="top:774.00px;font-size:14px;color:#fafafa;-webkit-text-stroke:0.45px currentColor;left:367.31px;transform:scaleX(1.0929);transform-origin:0 0;">Überschrift</span><span class="t" style="top:774.00px;font-size:14px;color:#fafafa;-webkit-text-stroke:0.45px currentColor;left:713.80px;transform:scaleX(1.0818);transform-origin:0 0;">Abschnittstyp</span><span class="t" style="top:774.00px;font-size:14px;color:#fafafa;-webkit-text-stroke:0.45px currentColor;left:877.70px;transform:scaleX(1.0834);transform-origin:0 0;">Status</span><span class="t" style="top:774.00px;font-size:14px;color:#fafafa;-webkit-text-stroke:0.45px currentColor;left:1049.60px;transform:scaleX(1.0791);transform-origin:0 0;">Zielwert</span><span class="t" style="top:774.00px;font-size:14px;color:#fafafa;-webkit-text-stroke:0.45px currentColor;left:1130.40px;transform:scaleX(1.0482);transform-origin:0 0;">Grenzwert</span><span class="t" style="top:774.00px;font-size:14px;color:#fafafa;-webkit-text-stroke:0.45px currentColor;left:1213.63px;transform:scaleX(1.0678);transform-origin:0 0;">Prüfer</span><svg class="i" style="left:305px;top:821px" width="12" height="12" viewBox="0 0 24 24" fill="none" stroke="#a1a1a1" stroke-width="2" stroke-linecap="round" stroke-linejoin="round"><path d="M9 5m-1 0a1 1 0 1 0 2 0a1 1 0 1 0 -2 0"/><path d="M9 12m-1 0a1 1 0 1 0 2 0a1 1 0 1 0 -2 0"/><path d="M9 19m-1 0a1 1 0 1 0 2 0a1 1 0 1 0 -2 0"/><path d="M15 5m-1 0a1 1 0 1 0 2 0a1 1 0 1 0 -2 0"/><path d="M15 12m-1 0a1 1 0 1 0 2 0a1 1 0 1 0 -2 0"/><path d="M15 19m-1 0a1 1 0 1 0 2 0a1 1 0 1 0 -2 0"/></svg><div class="cb" style="left:342px;top:819px"></div><span class="t" style="top:820.00px;font-size:14px;color:#fafafa;-webkit-text-stroke:0.45px currentColor;left:368.40px;transform:scaleX(1.0661);transform-origin:0 0;">Titelseite</span><div class="badge" style="left:714px;top:816px;width:65px;height:22px"></div><span class="t" style="top:821.00px;font-size:12px;color:#a1a1a1;left:720.60px;transform:scaleX(1.0627);transform-origin:0 0;">Titelseite</span><div class="badge" style="left:877px;top:816px;width:100px;height:22px"></div><svg class="i" style="left:884px;top:821px" width="12" height="12" viewBox="0 0 24 24" fill="none" stroke="#a1a1a1" stroke-width="2" stroke-linecap="round" stroke-linejoin="round"><path d="M12 6l0 -3"/><path d="M16.6 7.4l1.5 -1.5"/><path d="M18 12l3 0"/><path d="M16.6 16.6l1.5 1.5"/><path d="M12 18l0 3"/><path d="M7.4 16.6l-1.5 1.5"/><path d="M6 12l-3 0"/><path d="M7.4 7.4l-1.5 -1.5"/></svg><span class="t" style="top:821.00px;font-size:12px;color:#a1a1a1;left:900.90px;transform:scaleX(1.0712);transform-origin:0 0;">Bearbeitung</span><span class="t" style="top:820.00px;font-size:14px;color:#fafafa;-webkit-text-stroke:0.22px currentColor;left:1064.21px;transform:scaleX(0.8860);transform-origin:0 0;">18</span><span class="t" style="top:820.00px;font-size:14px;color:#fafafa;-webkit-text-stroke:0.22px currentColor;left:1161.20px;transform:scaleX(1.0000);transform-origin:0 0;">5</span><span class="t" style="top:820.00px;font-size:14px;color:#fafafa;-webkit-text-stroke:0.22px currentColor;left:1215.10px;transform:scaleX(0.9978);transform-origin:0 0;">Jana Weber</span><svg class="i" style="left:1413.5px;top:819px" width="16" height="16" viewBox="0 0 24 24" fill="none" stroke="#a1a1a1" stroke-width="2" stroke-linecap="round" stroke-linejoin="round"><path d="M12 12m-1 0a1 1 0 1 0 2 0a1 1 0 1 0 -2 0"/><path d="M12 19m-1 0a1 1 0 1 0 2 0a1 1 0 1 0 -2 0"/><path d="M12 5m-1 0a1 1 0 1 0 2 0a1 1 0 1 0 -2 0"/></svg></section></main></body></html>
